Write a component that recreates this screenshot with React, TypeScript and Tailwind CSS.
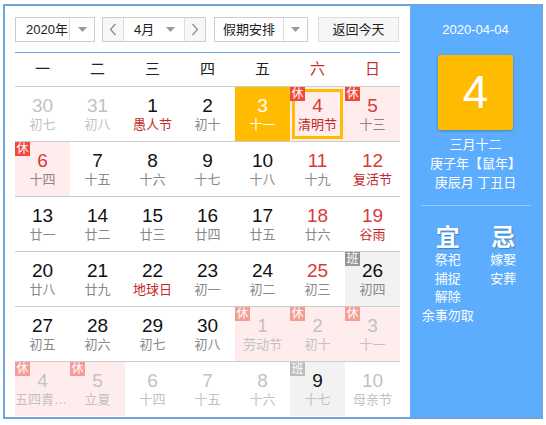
import React from 'react';

type Day = {
  n: number;
  l: string;
  muted?: boolean;
  red?: boolean;
  fest?: boolean;
  tag?: '休' | '班';
  today?: boolean;
  selected?: boolean;
  black?: boolean;
};

const weeks: Day[][] = [
  [
    { n: 30, l: '初七', muted: true },
    { n: 31, l: '初八', muted: true },
    { n: 1, l: '愚人节', fest: true },
    { n: 2, l: '初十' },
    { n: 3, l: '十一', today: true },
    { n: 4, l: '清明节', red: true, fest: true, tag: '休', selected: true },
    { n: 5, l: '十三', red: true, tag: '休' },
  ],
  [
    { n: 6, l: '十四', red: true, tag: '休' },
    { n: 7, l: '十五' },
    { n: 8, l: '十六' },
    { n: 9, l: '十七' },
    { n: 10, l: '十八' },
    { n: 11, l: '十九', red: true },
    { n: 12, l: '复活节', red: true, fest: true },
  ],
  [
    { n: 13, l: '廿一' },
    { n: 14, l: '廿二' },
    { n: 15, l: '廿三' },
    { n: 16, l: '廿四' },
    { n: 17, l: '廿五' },
    { n: 18, l: '廿六', red: true },
    { n: 19, l: '谷雨', red: true, fest: true },
  ],
  [
    { n: 20, l: '廿八' },
    { n: 21, l: '廿九' },
    { n: 22, l: '地球日', fest: true },
    { n: 23, l: '初一' },
    { n: 24, l: '初二' },
    { n: 25, l: '初三', red: true },
    { n: 26, l: '初四', tag: '班' },
  ],
  [
    { n: 27, l: '初五' },
    { n: 28, l: '初六' },
    { n: 29, l: '初七' },
    { n: 30, l: '初八' },
    { n: 1, l: '劳动节', muted: true, tag: '休' },
    { n: 2, l: '初十', muted: true, tag: '休' },
    { n: 3, l: '十一', muted: true, tag: '休' },
  ],
  [
    { n: 4, l: '五四青年节', muted: true, tag: '休' },
    { n: 5, l: '立夏', muted: true, tag: '休' },
    { n: 6, l: '十四', muted: true },
    { n: 7, l: '十五', muted: true },
    { n: 8, l: '十六', muted: true },
    { n: 9, l: '十七', muted: true, black: true, tag: '班' },
    { n: 10, l: '母亲节', muted: true },
  ],
];

function Caret() {
  return (
    <svg width="9" height="5" viewBox="0 0 9 5">
      <path d="M0 0h9L4.5 5z" fill="#999" />
    </svg>
  );
}

function Chevron({ dir }: { dir: 'left' | 'right' }) {
  return (
    <svg width="8" height="13" viewBox="0 0 8 13">
      <path
        d={dir === 'left' ? 'M6.5 1L1.5 6.5l5 5.5' : 'M1.5 1l5 5.5-5 5.5'}
        fill="none"
        stroke="#888"
        strokeWidth="1.2"
      />
    </svg>
  );
}

function Cell({ d }: { d: Day }) {
  let bg = 'bg-white';
  if (d.today) bg = 'bg-[#ffbb00]';
  else if (d.tag === '休') bg = 'bg-[#ffeded]';
  else if (d.tag === '班') bg = 'bg-[#f2f2f2]';

  let num = 'text-[#111]';
  if (d.today) num = 'text-white';
  else if (d.black) num = 'text-[#111]';
  else if (d.muted) num = 'text-[#c2c2c2]';
  else if (d.red) num = 'text-[#d9393b]';

  let lunar = 'text-[#888]';
  if (d.today) lunar = 'text-white';
  else if (d.muted) lunar = 'text-[#c2c2c2]';
  else if (d.fest) lunar = 'text-[#c4282a]';

  let tagBg = '';
  if (d.tag === '休') tagBg = d.muted ? 'bg-[#f59d94]' : 'bg-[#ef4a3c]';
  if (d.tag === '班') tagBg = d.muted ? 'bg-[#bdbdbd]' : 'bg-[#979797]';

  return (
    <div className={`relative flex min-w-0 flex-col items-center justify-center ${bg}`}>
      {d.selected && <div className="absolute inset-[2px] border-[3px] border-[#ffbb00]" />}
      {d.tag && (
        <span
          className={`absolute left-0 top-0 z-10 flex h-[14px] w-[15px] items-center justify-center text-[12px] leading-none text-white ${tagBg}`}
        >
          {d.tag}
        </span>
      )}
      <span className={`relative text-[19px] leading-[20px] ${num}`}>{d.n}</span>
      <span className={`relative block max-w-[55px] truncate text-[13px] leading-[17px] ${lunar}`}>{d.l}</span>
    </div>
  );
}

export default function App() {
  const weekdays = ['一', '二', '三', '四', '五', '六', '日'];

  return (
    <div className="pl-[3px] pt-[4px] font-['Liberation_Sans','Noto_Sans_CJK_SC',sans-serif]">
      <div className="flex h-[415px] w-[540px] border-2 border-[#6fa5dc] bg-white">
        {/* calendar */}
        <div className="w-[405px] px-[10px] pt-[11px]">
          <div className="flex h-[25px] text-[13px] text-[#222]">
            <div className="flex w-[80px] border border-[#cccccc]">
              <div className="flex flex-1 items-center border-r border-[#dddddd] pl-[10px]">2020年</div>
              <div className="flex w-[24px] items-center justify-center">
                <Caret />
              </div>
            </div>

            <div className="ml-[7px] flex w-[104px] border border-[#cccccc]">
              <div className="flex w-[21px] items-center justify-center border-r border-[#dddddd] bg-[#f7f7f7]">
                <Chevron dir="left" />
              </div>
              <div className="flex flex-1 items-center justify-between border-r border-[#dddddd] pl-[10px] pr-[9px]">
                <span>4月</span>
                <Caret />
              </div>
              <div className="flex w-[20px] items-center justify-center bg-[#f7f7f7]">
                <Chevron dir="right" />
              </div>
            </div>

            <div className="ml-[8px] flex w-[94px] border border-[#cccccc]">
              <div className="flex flex-1 items-center justify-center border-r border-[#dddddd]">假期安排</div>
              <div className="flex w-[23px] items-center justify-center">
                <Caret />
              </div>
            </div>

            <button className="ml-[10px] flex w-[81px] items-center justify-center border border-[#dddddd] bg-[#f6f6f6] text-[13px] text-[#222]">
              返回今天
            </button>
          </div>

          <div className="mt-[10px] grid h-[35px] grid-cols-7 items-center border-y border-t-[#6fa8dc] border-b-[#cccccc] text-center text-[15px]">
            {weekdays.map((w, i) => (
              <span key={w} className={i >= 5 ? 'text-[#c9302c]' : 'text-[#222]'}>
                {w}
              </span>
            ))}
          </div>

          {weeks.map((week, i) => (
            <div
              key={i}
              className={`grid grid-cols-7 ${i < weeks.length - 1 ? 'h-[55px] border-b border-[#cccccc]' : 'h-[54px]'}`}
            >
              {week.map((d, j) => (
                <Cell key={j} d={d} />
              ))}
            </div>
          ))}
        </div>

        {/* side panel */}
        <div className="flex w-[131px] flex-col items-center bg-[#5cadfd] pt-[15px] text-white">
          <div className="text-[13px] leading-[18px]">2020-04-04</div>
          <div className="mt-[16px] flex h-[75px] w-[75px] items-center justify-center rounded-[2px] bg-[#ffbb00] text-[46px] shadow-[0_1px_3px_rgba(0,0,0,0.25)]">
            4
          </div>
          <div className="mt-[5px] text-center text-[13px] leading-[19px]">
            <div>三月十二</div>
            <div>庚子年【鼠年】</div>
            <div>庚辰月 丁丑日</div>
          </div>
          <div className="mt-[13px] h-px w-[110px] bg-[#9bcaff]" />
          <div className="mt-[19px] grid w-full grid-cols-2 px-[10px] text-center">
            <div className="flex flex-col items-center">
              <div className="text-[24px] font-bold leading-[26px] [text-shadow:1px_1px_1px_rgba(0,0,0,0.25)]">宜</div>
              <div className="text-[13px] leading-[18.5px]">
                <div>祭祀</div>
                <div>捕捉</div>
                <div>解除</div>
                <div>余事勿取</div>
              </div>
            </div>
            <div className="flex flex-col items-center">
              <div className="text-[24px] font-bold leading-[26px] [text-shadow:1px_1px_1px_rgba(0,0,0,0.25)]">忌</div>
              <div className="text-[13px] leading-[18.5px]">
                <div>嫁娶</div>
                <div>安葬</div>
              </div>
            </div>
          </div>
        </div>
      </div>
    </div>
  );
}
